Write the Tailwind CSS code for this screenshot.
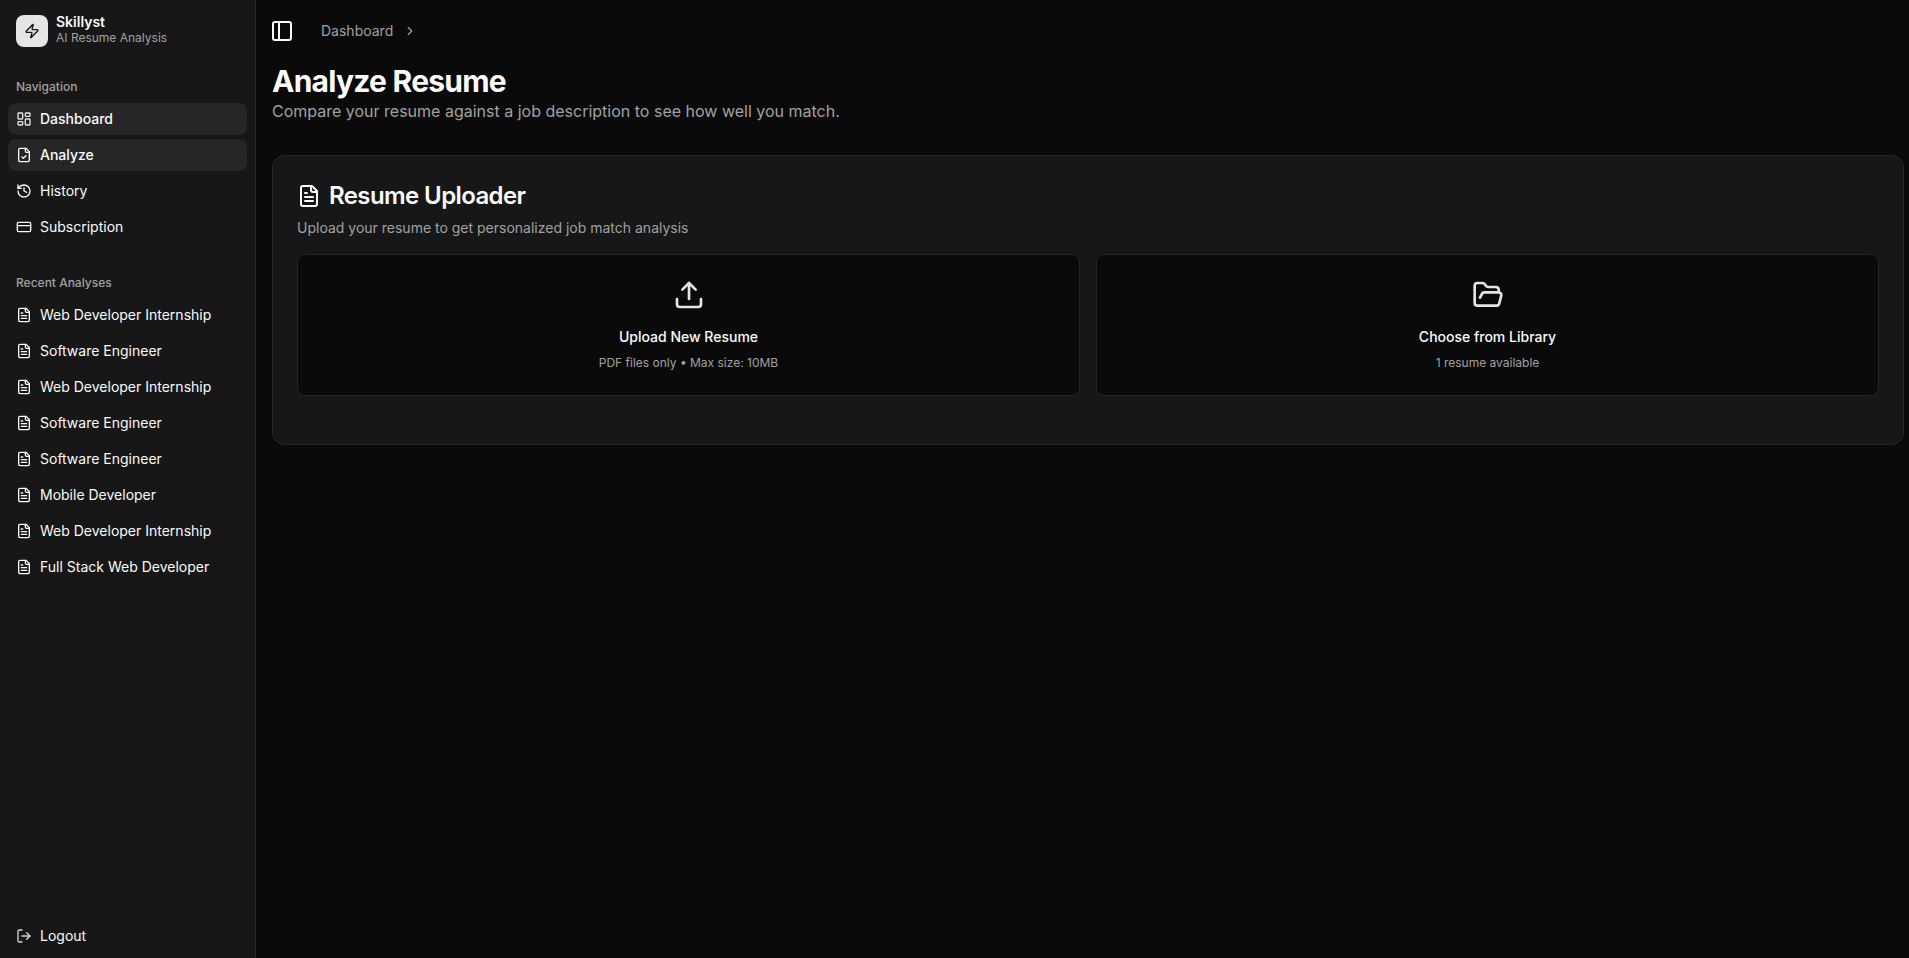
<!DOCTYPE html>
<html lang="en">
<head>
    <meta charset="UTF-8" />
    <title>Analyze Resume</title>
    <script src="https://cdn.jsdelivr.net/npm/@tailwindcss/browser@4"></script>
</head>
<body class="bg-[#0a0a0a] text-[#fafafa] font-['Inter',sans-serif] h-screen overflow-hidden">
    <div class="flex h-[958px]">
        <!-- Sidebar -->
        <aside class="w-[256px] shrink-0 h-full bg-[#171717] border-r border-[#262626] flex flex-col px-2">
            <div class="flex items-center gap-2 pl-2 pt-[15px] h-[47px]">
                <div class="w-8 h-8 rounded-lg bg-[#e5e5e5] text-[#171717] flex items-center justify-center">
                    <svg class="w-4 h-4" viewBox="0 0 24 24" fill="none" stroke="currentColor" stroke-width="2" stroke-linecap="round" stroke-linejoin="round"><path d="M4 14a1 1 0 0 1-.78-1.63l9.9-10.2a.5.5 0 0 1 .86.46l-1.92 6.02A1 1 0 0 0 13 10h7a1 1 0 0 1 .78 1.63l-9.9 10.2a.5.5 0 0 1-.86-.46l1.92-6.02A1 1 0 0 0 11 14z"/></svg>
                </div>
                <div class="flex flex-col leading-none pb-[3px]">
                    <span class="text-sm font-semibold leading-[17px]">Skillyst</span>
                    <span class="text-xs text-[#a1a1a1] leading-[16px]">AI Resume Analysis</span>
                </div>
            </div>

            <div class="mt-6 h-8 px-2 flex items-center text-xs font-medium text-[#a1a1a1]">Navigation</div>
            <nav class="flex flex-col gap-1 text-sm">
                <a class="h-8 px-2 flex items-center gap-2 rounded-lg bg-[#262626] font-medium">
                    <svg class="w-4 h-4 text-[#e5e5e5]" viewBox="0 0 24 24" fill="none" stroke="currentColor" stroke-width="2" stroke-linecap="round" stroke-linejoin="round"><rect width="7" height="9" x="3" y="3" rx="1"/><rect width="7" height="5" x="14" y="3" rx="1"/><rect width="7" height="9" x="14" y="12" rx="1"/><rect width="7" height="5" x="3" y="16" rx="1"/></svg>
                    Dashboard
                </a>
                <a class="h-8 px-2 flex items-center gap-2 rounded-lg bg-[#262626] font-medium">
                    <svg class="w-4 h-4" viewBox="0 0 24 24" fill="none" stroke="currentColor" stroke-width="2" stroke-linecap="round" stroke-linejoin="round"><path d="M15 2H6a2 2 0 0 0-2 2v16a2 2 0 0 0 2 2h12a2 2 0 0 0 2-2V7Z"/><path d="M14 2v4a2 2 0 0 0 2 2h4"/><path d="m9 15 2 2 4-4"/></svg>
                    Analyze
                </a>
                <a class="h-8 px-2 flex items-center gap-2 rounded-lg">
                    <svg class="w-4 h-4" viewBox="0 0 24 24" fill="none" stroke="currentColor" stroke-width="2" stroke-linecap="round" stroke-linejoin="round"><path d="M3 12a9 9 0 1 0 9-9 9.75 9.75 0 0 0-6.74 2.74L3 8"/><path d="M3 3v5h5"/><path d="M12 7v5l4 2"/></svg>
                    History
                </a>
                <a class="h-8 px-2 flex items-center gap-2 rounded-lg">
                    <svg class="w-4 h-4" viewBox="0 0 24 24" fill="none" stroke="currentColor" stroke-width="2" stroke-linecap="round" stroke-linejoin="round"><rect width="20" height="14" x="2" y="5" rx="2"/><line x1="2" x2="22" y1="10" y2="10"/></svg>
                    Subscription
                </a>
            </nav>

            <div class="mt-6 h-8 px-2 flex items-center text-xs font-medium text-[#a1a1a1]">Recent Analyses</div>
            <nav class="flex flex-col gap-1 text-sm">
                <a class="h-8 px-2 flex items-center gap-2"><svg class="w-4 h-4" viewBox="0 0 24 24" fill="none" stroke="currentColor" stroke-width="2" stroke-linecap="round" stroke-linejoin="round"><path d="M15 2H6a2 2 0 0 0-2 2v16a2 2 0 0 0 2 2h12a2 2 0 0 0 2-2V7Z"/><path d="M14 2v4a2 2 0 0 0 2 2h4"/><path d="M10 9H8"/><path d="M16 13H8"/><path d="M16 17H8"/></svg>Web Developer Internship</a>
                <a class="h-8 px-2 flex items-center gap-2"><svg class="w-4 h-4" viewBox="0 0 24 24" fill="none" stroke="currentColor" stroke-width="2" stroke-linecap="round" stroke-linejoin="round"><path d="M15 2H6a2 2 0 0 0-2 2v16a2 2 0 0 0 2 2h12a2 2 0 0 0 2-2V7Z"/><path d="M14 2v4a2 2 0 0 0 2 2h4"/><path d="M10 9H8"/><path d="M16 13H8"/><path d="M16 17H8"/></svg>Software Engineer</a>
                <a class="h-8 px-2 flex items-center gap-2"><svg class="w-4 h-4" viewBox="0 0 24 24" fill="none" stroke="currentColor" stroke-width="2" stroke-linecap="round" stroke-linejoin="round"><path d="M15 2H6a2 2 0 0 0-2 2v16a2 2 0 0 0 2 2h12a2 2 0 0 0 2-2V7Z"/><path d="M14 2v4a2 2 0 0 0 2 2h4"/><path d="M10 9H8"/><path d="M16 13H8"/><path d="M16 17H8"/></svg>Web Developer Internship</a>
                <a class="h-8 px-2 flex items-center gap-2"><svg class="w-4 h-4" viewBox="0 0 24 24" fill="none" stroke="currentColor" stroke-width="2" stroke-linecap="round" stroke-linejoin="round"><path d="M15 2H6a2 2 0 0 0-2 2v16a2 2 0 0 0 2 2h12a2 2 0 0 0 2-2V7Z"/><path d="M14 2v4a2 2 0 0 0 2 2h4"/><path d="M10 9H8"/><path d="M16 13H8"/><path d="M16 17H8"/></svg>Software Engineer</a>
                <a class="h-8 px-2 flex items-center gap-2"><svg class="w-4 h-4" viewBox="0 0 24 24" fill="none" stroke="currentColor" stroke-width="2" stroke-linecap="round" stroke-linejoin="round"><path d="M15 2H6a2 2 0 0 0-2 2v16a2 2 0 0 0 2 2h12a2 2 0 0 0 2-2V7Z"/><path d="M14 2v4a2 2 0 0 0 2 2h4"/><path d="M10 9H8"/><path d="M16 13H8"/><path d="M16 17H8"/></svg>Software Engineer</a>
                <a class="h-8 px-2 flex items-center gap-2"><svg class="w-4 h-4" viewBox="0 0 24 24" fill="none" stroke="currentColor" stroke-width="2" stroke-linecap="round" stroke-linejoin="round"><path d="M15 2H6a2 2 0 0 0-2 2v16a2 2 0 0 0 2 2h12a2 2 0 0 0 2-2V7Z"/><path d="M14 2v4a2 2 0 0 0 2 2h4"/><path d="M10 9H8"/><path d="M16 13H8"/><path d="M16 17H8"/></svg>Mobile Developer</a>
                <a class="h-8 px-2 flex items-center gap-2"><svg class="w-4 h-4" viewBox="0 0 24 24" fill="none" stroke="currentColor" stroke-width="2" stroke-linecap="round" stroke-linejoin="round"><path d="M15 2H6a2 2 0 0 0-2 2v16a2 2 0 0 0 2 2h12a2 2 0 0 0 2-2V7Z"/><path d="M14 2v4a2 2 0 0 0 2 2h4"/><path d="M10 9H8"/><path d="M16 13H8"/><path d="M16 17H8"/></svg>Web Developer Internship</a>
                <a class="h-8 px-2 flex items-center gap-2"><svg class="w-4 h-4" viewBox="0 0 24 24" fill="none" stroke="currentColor" stroke-width="2" stroke-linecap="round" stroke-linejoin="round"><path d="M15 2H6a2 2 0 0 0-2 2v16a2 2 0 0 0 2 2h12a2 2 0 0 0 2-2V7Z"/><path d="M14 2v4a2 2 0 0 0 2 2h4"/><path d="M10 9H8"/><path d="M16 13H8"/><path d="M16 17H8"/></svg>Full Stack Web Developer</a>
            </nav>

            <a class="mt-auto mb-[6px] h-8 px-2 flex items-center gap-2 text-sm">
                <svg class="w-4 h-4 text-[#d4d4d4]" viewBox="0 0 24 24" fill="none" stroke="currentColor" stroke-width="2" stroke-linecap="round" stroke-linejoin="round"><path d="m16 17 5-5-5-5"/><path d="M21 12H9"/><path d="M9 21H5a2 2 0 0 1-2-2V5a2 2 0 0 1 2-2h4"/></svg>
                Logout
            </a>
        </aside>

        <!-- Main -->
        <main class="flex-1 min-w-0 pl-4 pr-[5px]">
            <header class="h-[62px] flex items-center">
                <svg class="w-6 h-6 -ml-[2px]" viewBox="0 0 24 24" fill="none" stroke="currentColor" stroke-width="2" stroke-linecap="round" stroke-linejoin="round"><rect width="18" height="18" x="3" y="3" rx="2"/><path d="M9 3v18"/></svg>
                <span class="ml-[27px] text-sm text-[#a1a1a1]">Dashboard</span>
                <svg class="w-3.5 h-3.5 ml-[10px] text-[#a1a1a1]" viewBox="0 0 24 24" fill="none" stroke="currentColor" stroke-width="2" stroke-linecap="round" stroke-linejoin="round"><path d="m9 18 6-6-6-6"/></svg>
            </header>

            <h1 class="text-3xl font-bold tracking-tight leading-[36px] mt-[1px]">Analyze Resume</h1>
            <p class="text-[#a1a1a1] leading-[24px]">Compare your resume against a job description to see how well you match.</p>

            <section class="mt-8 h-[290px] bg-[#171717] border border-[#262626] rounded-xl px-6 pt-6">
                <div class="flex items-center gap-2 h-8">
                    <svg class="w-6 h-6" viewBox="0 0 24 24" fill="none" stroke="currentColor" stroke-width="2" stroke-linecap="round" stroke-linejoin="round"><path d="M15 2H6a2 2 0 0 0-2 2v16a2 2 0 0 0 2 2h12a2 2 0 0 0 2-2V7Z"/><path d="M14 2v4a2 2 0 0 0 2 2h4"/><path d="M10 9H8"/><path d="M16 13H8"/><path d="M16 17H8"/></svg>
                    <h2 class="text-2xl font-semibold tracking-tight">Resume Uploader</h2>
                </div>
                <p class="text-sm text-[#a1a1a1] mt-[6px] leading-5">Upload your resume to get personalized job match analysis</p>
                <div class="grid grid-cols-2 gap-4 mt-4">
                    <div class="h-[142px] bg-[#0a0a0a] border border-[#262626] rounded-lg flex flex-col items-center pt-6">
                        <svg class="w-8 h-8 text-[#e5e5e5]" viewBox="0 0 24 24" fill="none" stroke="currentColor" stroke-width="2" stroke-linecap="round" stroke-linejoin="round"><path d="M21 15v4a2 2 0 0 1-2 2H5a2 2 0 0 1-2-2v-4"/><path d="m17 8-5-5-5 5"/><path d="M12 3v12"/></svg>
                        <span class="mt-4 text-sm font-medium leading-5">Upload New Resume</span>
                        <span class="mt-2 text-xs text-[#a1a1a1] leading-4">PDF files only • Max size: 10MB</span>
                    </div>
                    <div class="h-[142px] bg-[#0a0a0a] border border-[#262626] rounded-lg flex flex-col items-center pt-6">
                        <svg class="w-8 h-8 text-[#e5e5e5]" viewBox="0 0 24 24" fill="none" stroke="currentColor" stroke-width="2" stroke-linecap="round" stroke-linejoin="round"><path d="m6 14 1.5-2.9A2 2 0 0 1 9.24 10H20a2 2 0 0 1 1.94 2.5l-1.54 6a2 2 0 0 1-1.95 1.5H4a2 2 0 0 1-2-2V5a2 2 0 0 1 2-2h3.9a2 2 0 0 1 1.69.9l.81 1.2a2 2 0 0 0 1.67.9H18a2 2 0 0 1 2 2v2"/></svg>
                        <span class="mt-4 text-sm font-medium leading-5">Choose from Library</span>
                        <span class="mt-2 text-xs text-[#a1a1a1] leading-4">1 resume available</span>
                    </div>
                </div>
            </section>
        </main>
    </div>
</body>
</html>
